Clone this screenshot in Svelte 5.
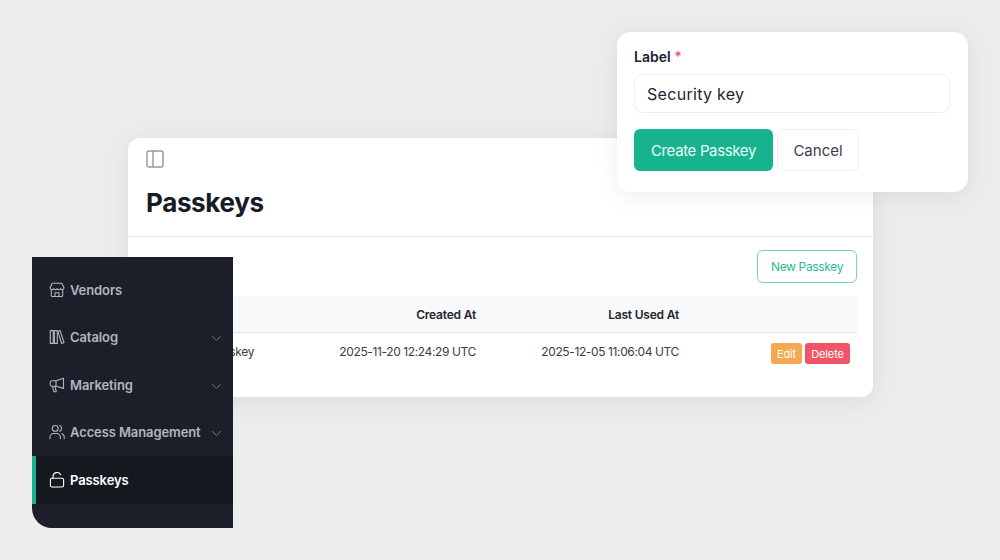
<script>
  const nav = [
    { label: 'Vendors', icon: 'store' },
    { label: 'Catalog', icon: 'books', chevron: true },
    { label: 'Marketing', icon: 'mega', chevron: true },
    { label: 'Access Management', icon: 'users', chevron: true },
    { label: 'Passkeys', icon: 'lock', active: true }
  ];
</script>

<div class="stage">
  <section class="card">
    <div class="toolbar">
      <svg class="toggle" viewBox="0 0 18 18" width="18" height="18" fill="none" stroke="#94969a" stroke-width="1.4">
        <rect x="1" y="1" width="16" height="16" rx="2" />
        <path d="M7 1v16" />
      </svg>
    </div>
    <h1>Passkeys</h1>
    <div class="body">
      <div class="actions">
        <button class="new">New Passkey</button>
      </div>
      <table>
        <thead>
          <tr>
            <th class="name">Label</th>
            <th class="created">Created At</th>
            <th class="used">Last Used At</th>
            <th></th>
          </tr>
        </thead>
        <tbody>
          <tr>
            <td class="name">Laptop Passkey</td>
            <td class="created">2025-11-20 12:24:29 UTC</td>
            <td class="used">2025-12-05 11:06:04 UTC</td>
            <td class="ops">
              <div class="ops-row">
                <button class="mini edit">Edit</button>
                <button class="mini del">Delete</button>
              </div>
            </td>
          </tr>
        </tbody>
      </table>
    </div>
  </section>

  <section class="popup">
    <div class="label">Label <span>*</span></div>
    <div class="input">Security key</div>
    <div class="row">
      <button class="create">Create Passkey</button>
      <button class="cancel">Cancel</button>
    </div>
  </section>

  <nav class="side">
    {#each nav as item}
      <div class="item" class:active={item.active}>
        <svg viewBox="0 0 16 16" width="16" height="16" fill="none" stroke="currentColor" stroke-width="1.1" stroke-linecap="round" stroke-linejoin="round">
          {#if item.icon === 'store'}
            <path d="M3.2 1.2h9.6l2.2 4.6a1.9 1.9 0 0 1-3.5.9 2.1 2.1 0 0 1-3.5 0 2.1 2.1 0 0 1-3.5 0A1.9 1.9 0 0 1 1 5.8z" />
            <path d="M2.3 7.8v5.4a1.3 1.3 0 0 0 1.3 1.3h8.8a1.3 1.3 0 0 0 1.3-1.3V7.8" />
            <path d="M6 14.5v-3.7h4v3.7" />
          {:else if item.icon === 'books'}
            <path d="M1.3 1.6h2.9v12.8H1.3zM5.4 1.6h2.9v12.8H5.4z" />
            <path d="M9 2.6l2.2-1 3.8 12-2.4.9z" />
          {:else if item.icon === 'mega'}
            <path d="M14.5 1.2v10.2L7 9.2H2.8a1.6 1.6 0 0 1-1.6-1.6V5.4a1.6 1.6 0 0 1 1.6-1.6H7z" />
            <path d="M7 3.8v5.4M3.5 9.2l1.4 5.6h2.4L6 9.2" />
          {:else if item.icon === 'users'}
            <circle cx="6.2" cy="4.4" r="2.9" />
            <path d="M1 14.6v-1.4a3.7 3.7 0 0 1 3.7-3.7h3a3.7 3.7 0 0 1 3.7 3.7v1.4" />
            <path d="M10.6 1.6a3 3 0 0 1 0 5.6M12.8 9.7a3.6 3.6 0 0 1 2.4 3.4v1.5" />
          {:else}
            <rect x="1.4" y="6.2" width="13.2" height="8.8" rx="1.6" />
            <path d="M4 6.2V4.4a4 4 0 0 1 7.6-1.6" />
          {/if}
        </svg>
        <span class="text">{item.label}</span>
        {#if item.chevron}
          <svg class="chev" viewBox="0 0 12 8" width="11" height="7" fill="none" stroke="#80848b" stroke-width="1">
            <path d="M1 1.2l5 5 5-5" />
          </svg>
        {/if}
      </div>
    {/each}
  </nav>
</div>

<style>
  :global(body) {
    margin: 0;
    background: #ececec;
  }

  .stage {
    position: relative;
    width: 1000px;
    height: 560px;
    overflow: hidden;
    background: #ececec;
    font-family: "Inter", "Noto Sans", sans-serif;
    color: #161b26;
  }

  button {
    font-family: inherit;
    cursor: pointer;
  }

  .card {
    position: absolute;
    left: 128px;
    top: 138px;
    width: 745px;
    height: 259px;
    box-sizing: border-box;
    background: #fff;
    border-radius: 12px;
    box-shadow: 0 4px 24px rgba(0, 0, 0, 0.07);
  }

  .toolbar {
    display: flex;
    padding: 12px 18px 0;
    height: 20px;
  }

  h1 {
    margin: 17px 18px 0;
    font-size: 26px;
    line-height: 32px;
    font-weight: 700;
    letter-spacing: -0.35px;
    height: 49px;
    color: #161b26;
  }

  .body {
    border-top: 1px solid #e9eaec;
    padding: 13px 16px 0 17px;
  }

  .actions {
    display: flex;
    justify-content: flex-end;
    margin-bottom: 13px;
  }

  .new {
    width: 100px;
    height: 33px;
    padding: 0;
    background: #fff;
    border: 1px solid #76d3bd;
    border-radius: 6px;
    color: #2fb897;
    font-size: 12px;
    letter-spacing: -0.35px;
  }

  table {
    width: 712px;
    border-collapse: collapse;
    table-layout: fixed;
    font-size: 12px;
  }

  th {
    height: 36px;
    padding: 0;
    background: #f8f9fa;
    border-bottom: 1px solid #e2e3e5;
    font-weight: 600;
    letter-spacing: -0.2px;
    text-align: right;
    color: #22252d;
  }

  th.name {
    text-align: left;
    padding-left: 12px;
    box-sizing: border-box;
  }

  th.name, td.name {
    width: 109px;
  }

  td.name {
    text-align: right;
  }

  .created {
    width: 222px;
  }

  .used {
    width: 203px;
  }

  td {
    padding: 10px 0 0;
    vertical-align: top;
    text-align: right;
    color: #3a3d45;
    line-height: 18px;
    letter-spacing: -0.38px;
  }

  td.ops {
    padding-right: 7px;
  }

  .ops-row {
    display: flex;
    justify-content: flex-end;
    gap: 3px;
  }

  .mini {
    height: 21px;
    padding: 0;
    border: 0;
    border-radius: 3px;
    color: #fff;
    font-size: 11px;
    letter-spacing: -0.1px;
  }

  .edit {
    width: 31px;
    background: #f6a752;
  }

  .del {
    width: 45px;
    background: #ef5467;
  }

  .popup {
    position: absolute;
    left: 617px;
    top: 32px;
    width: 351px;
    height: 160px;
    box-sizing: border-box;
    padding: 16px 18px 16px 17px;
    background: #fff;
    border-radius: 14px;
    box-shadow: 0 4px 24px rgba(0, 0, 0, 0.07);
  }

  .label {
    font-size: 14px;
    line-height: 18px;
    font-weight: 600;
    color: #1b2230;
  }

  .label span {
    color: #f0596c;
  }

  .input {
    box-sizing: border-box;
    margin-top: 8px;
    height: 39px;
    padding: 0 12px;
    display: flex;
    align-items: center;
    border: 1px solid #eeeff0;
    border-radius: 8px;
    font-size: 16px;
    letter-spacing: 0.3px;
    color: #1d2433;
  }

  .row {
    display: flex;
    gap: 4px;
    margin-top: 16px;
  }

  .create {
    width: 139px;
    height: 42px;
    padding: 0;
    border: 0;
    border-radius: 6px;
    background: #17b38f;
    color: #eafaf5;
    font-size: 15px;
    letter-spacing: -0.35px;
  }

  .cancel {
    width: 82px;
    height: 42px;
    padding: 0;
    background: #fff;
    border: 1px solid #eeeff0;
    border-radius: 6px;
    color: #3b3e4a;
    font-size: 15px;
  }

  .side {
    position: absolute;
    left: 32px;
    top: 257px;
    width: 201px;
    height: 271px;
    box-sizing: border-box;
    padding-top: 9px;
    background: #1c1f2a;
    border-bottom-left-radius: 20px;
    overflow: hidden;
  }

  .item {
    box-sizing: border-box;
    height: 47.5px;
    display: flex;
    align-items: center;
    gap: 5px;
    padding: 0 11px 0 17px;
    color: #b3b6bd;
    font-size: 13px;
    font-weight: 600;
    letter-spacing: -0.1px;
  }

  .text {
    flex: 1;
    white-space: nowrap;
  }

  .chev {
    margin-top: 3px;
  }

  .active {
    background: #161820;
    border-left: 4px solid #17b38f;
    padding-left: 13px;
    color: #fff;
    letter-spacing: -0.1px;
  }
</style>
